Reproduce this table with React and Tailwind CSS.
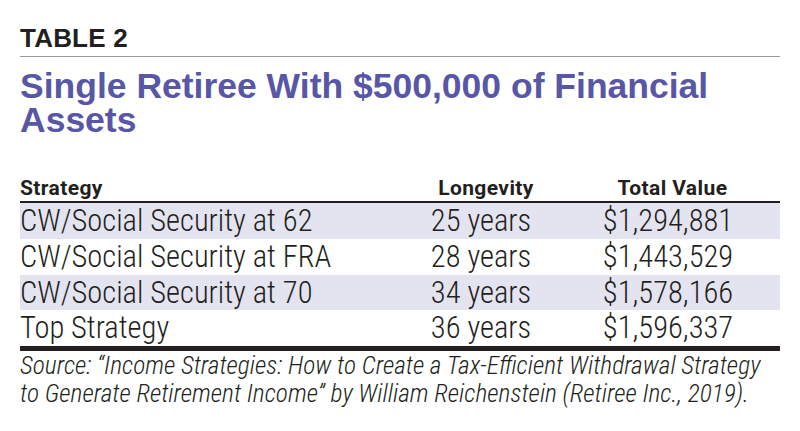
const rows = [
  { strategy: 'CW/Social Security at 62', longevity: '25 years', total: '$1,294,881' },
  { strategy: 'CW/Social Security at FRA', longevity: '28 years', total: '$1,443,529' },
  { strategy: 'CW/Social Security at 70', longevity: '34 years', total: '$1,578,166' },
  { strategy: 'Top Strategy', longevity: '36 years', total: '$1,596,337' },
];

const App = () => {
  return (
    <div className="w-[800px] h-[431px] bg-white px-[20px] pt-[23px] text-[#231f20] overflow-hidden">
      <h3 className="font-['Liberation_Sans',Arial,sans-serif] font-bold text-[26px] leading-[30px] tracking-[0.2px]">
        TABLE 2
      </h3>
      <div className="mt-[3px] h-px bg-[#9a9a9a]" />

      <h2 className="mt-[12px] font-['Liberation_Sans',Arial,sans-serif] font-bold text-[35.5px] leading-[34px] text-[#5856a6]">
        Single Retiree With $500,000 of Financial Assets
      </h2>

      <div className="mt-[40px] font-['Roboto_Condensed',Roboto,sans-serif]">
        <div className="grid grid-cols-[370px_182px_192px_1fr] pb-[2px] border-b-2 border-[#231f20] font-['Roboto',sans-serif] font-bold font-stretch-[88%] text-[21px] leading-[22px] tracking-[0.4px]">
          <span>Strategy</span>
          <span className="text-center pl-[10px]">Longevity</span>
          <span className="text-center pl-[9px]">Total Value</span>
        </div>

        <div className="border-b-[5px] border-[#231f20]">
          {rows.map((row, i) => (
            <div
              key={row.strategy}
              className={`grid grid-cols-[370px_182px_192px_1fr] h-[35.75px] font-light text-[30.5px] leading-[35.75px] ${i % 2 === 0 ? 'bg-[#e4e4f0]' : 'bg-white'}`}
            >
              <span>{row.strategy}</span>
              <span className="text-center">{row.longevity}</span>
              <span className="text-center">{row.total}</span>
            </div>
          ))}
        </div>

        <p className="italic font-light text-[25.4px] leading-[28px]">
          Source: “Income Strategies: How to Create a Tax-Efficient Withdrawal Strategy
          <br />
          to Generate Retirement Income” by William Reichenstein (Retiree Inc., 2019).
        </p>
      </div>
    </div>
  );
};

export default App;
